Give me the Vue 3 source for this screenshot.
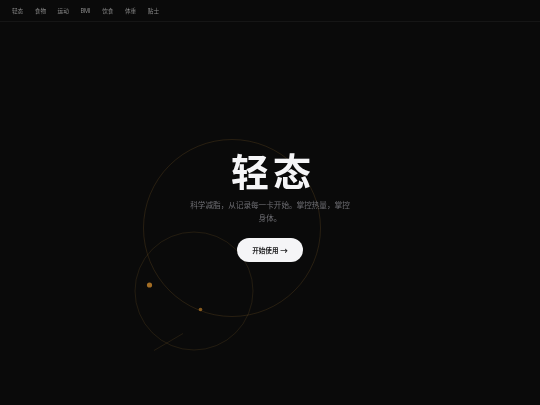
<script setup>
const links = ['轻态', '食物', '运动', 'BMI', '饮食', '体重', '贴士']
</script>

<template>
  <div class="page">
    <nav class="nav">
      <a v-for="l in links" :key="l" class="link">{{ l }}</a>
    </nav>
    <main class="hero">
      <svg class="deco" width="540" height="405" viewBox="0 0 540 405" fill="none">
        <circle cx="232" cy="228" r="88.5" stroke="#c9943a" stroke-opacity=".2" stroke-width=".8" />
        <circle cx="194" cy="291" r="59" stroke="#c9943a" stroke-opacity=".17" stroke-width=".8" />
        <line x1="154" y1="350.5" x2="183" y2="333.5" stroke="#c9943a" stroke-opacity=".17" stroke-width=".8" />
        <circle cx="149.5" cy="285" r="2.6" fill="#c9862a" fill-opacity=".8" />
        <circle cx="200.5" cy="309.5" r="1.8" fill="#c9862a" fill-opacity=".65" />
      </svg>
      <h1 class="title">轻态</h1>
      <p class="sub">科学减脂，从记录每一卡开始。掌控热量，掌控身体。</p>
      <button class="cta">开始使用 <span class="arrow">→</span></button>
    </main>
  </div>
</template>

<style>
html, body { margin: 0; background: #0a0a0a; }
</style>

<style scoped>
.page {
  width: 540px;
  height: 405px;
  background: #0a0a0a;
  display: flex;
  flex-direction: column;
  overflow: hidden;
  font-family: Inter, "Noto Sans CJK SC", sans-serif;
  filter: blur(0.3px);
}
.nav {
  height: 22px;
  box-sizing: border-box;
  border-bottom: 1px solid #161616;
  display: flex;
  align-items: center;
  gap: 11.6px;
  padding: 0 12px 0;
}
.link {
  font-size: 5.6px;
  color: #8a8a8a;
}
.hero {
  position: relative;
  flex: 1;
  display: flex;
  flex-direction: column;
  align-items: center;
  justify-content: flex-start;
  padding-top: 125px;
}
.deco {
  position: absolute;
  left: 0;
  top: -22px;
  pointer-events: none;
}
.title {
  position: relative;
  margin: 0 0 0 6px;
  font-size: 38px;
  line-height: 50px;
  font-weight: 700;
  letter-spacing: 4px;
  color: #f5f5f7;
}
.sub {
  position: relative;
  margin: 3px 0 0;
  width: 162px;
  font-size: 7.6px;
  line-height: 12.6px;
  color: #6e6e73;
  text-align: center;
}
.cta {
  position: relative;
  margin-top: 13px;
  width: 66px;
  height: 24px;
  padding: 0;
  border: 0;
  border-radius: 12px;
  background: #f5f5f7;
  color: #1d1d1f;
  font-family: inherit;
  font-size: 6.6px;
  font-weight: 600;
}
.arrow {
  font-size: 7.6px;
  line-height: 1;
  vertical-align: -0.7px;
  font-family: "Noto Sans CJK SC", sans-serif;
}
</style>
